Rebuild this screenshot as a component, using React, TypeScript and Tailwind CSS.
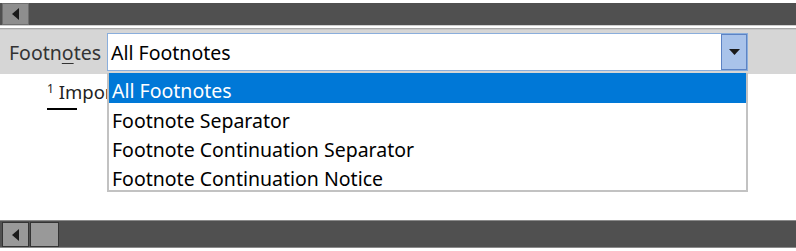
import React from 'react'

const items = [
  'All Footnotes',
  'Footnote Separator',
  'Footnote Continuation Separator',
  'Footnote Continuation Notice',
]

const LeftArrow = () => (
  <svg width="8" height="12" viewBox="0 0 8 12">
    <path d="M7 0 L0 6 L7 12 Z" fill="#1a1a1a" />
  </svg>
)

export default function App() {
  return (
    <div className="relative h-[251px] w-[796px] overflow-hidden bg-white font-['Noto_Sans',sans-serif] text-[#1a1a1a]">
      <div className="h-[3px]" />
      {/* top scrollbar */}
      <div className="flex h-[22px] w-full bg-[#505050]">
        <div className="ml-[2px] flex h-full w-[27px] items-center justify-center border border-[#6e6e6e] bg-[#8e8e8e]">
          <LeftArrow />
        </div>
      </div>
      <div className="h-[1px] bg-[#d0d0d0]" />
      <div className="h-[2px] bg-white" />
      <div className="h-[1px] bg-[#a8a8a8]" />
      <div className="h-[1px] bg-[#c8c8c8]" />

      {/* footnotes toolbar */}
      <div className="flex h-[44px] items-center bg-[#d6d6d6]">
        <div className="w-[107px] pl-[9px] pt-[2px] text-[19.5px] text-[#333]">
          Footn<span className="underline underline-offset-[3px]">o</span>tes
        </div>
        <div className="flex h-[38px] w-[641px] items-center border border-[#8aaedc] bg-white">
          <span className="flex-1 pl-[3px] pt-[2px] text-[19.5px] text-black">All Footnotes</span>
          <div className="flex h-full w-[26px] items-center justify-center border border-[#5d83c4] bg-[#a9c3ea]">
            <svg width="11" height="7" viewBox="0 0 11 7">
              <path d="M0 0 L11 0 L5.5 6 Z" fill="#1a1a1a" />
            </svg>
          </div>
        </div>
      </div>

      {/* footnote body, partly hidden behind the open list */}
      <div className="pl-[47px] pt-[5px]">
        <div className="whitespace-nowrap text-[18.5px] leading-[26px] text-[#222]">
          <sup className="text-[12px]">1</sup> Impor
        </div>
        <div className="mt-[3px] h-[2px] w-[30px] bg-black" />
      </div>

      {/* dropdown list */}
      <div className="absolute left-[107px] top-[73px] w-[641px] border-2 border-t-0 border-[#c2c2c2] bg-white">
        {items.map((item, i) => (
          <div
            key={item}
            className={
              i === 0
                ? 'h-[30px] bg-[#0078d7] pl-[3px] pt-[6px] text-[19.5px] leading-[23px] text-white'
                : 'h-[29px] pl-[3px] pt-[6px] text-[19.5px] leading-[23px] text-black'
            }
          >
            {item}
          </div>
        ))}
      </div>

      {/* bottom scrollbar */}
      <div className="absolute bottom-[3px] left-0 w-full">
        <div className="h-[1px] bg-[#8a8a8a]" />
        <div className="flex h-[26px] w-full bg-[#505050] pt-[1px]">
          <div className="ml-[2px] flex h-[25px] w-[27px] items-center justify-center border border-[#333] bg-[#999]">
            <LeftArrow />
          </div>
          <div className="ml-[1px] h-[25px] w-[29px] border border-[#333] bg-[#999]" />
        </div>
        <div className="h-[1px] bg-[#8a8a8a]" />
      </div>
    </div>
  )
}
